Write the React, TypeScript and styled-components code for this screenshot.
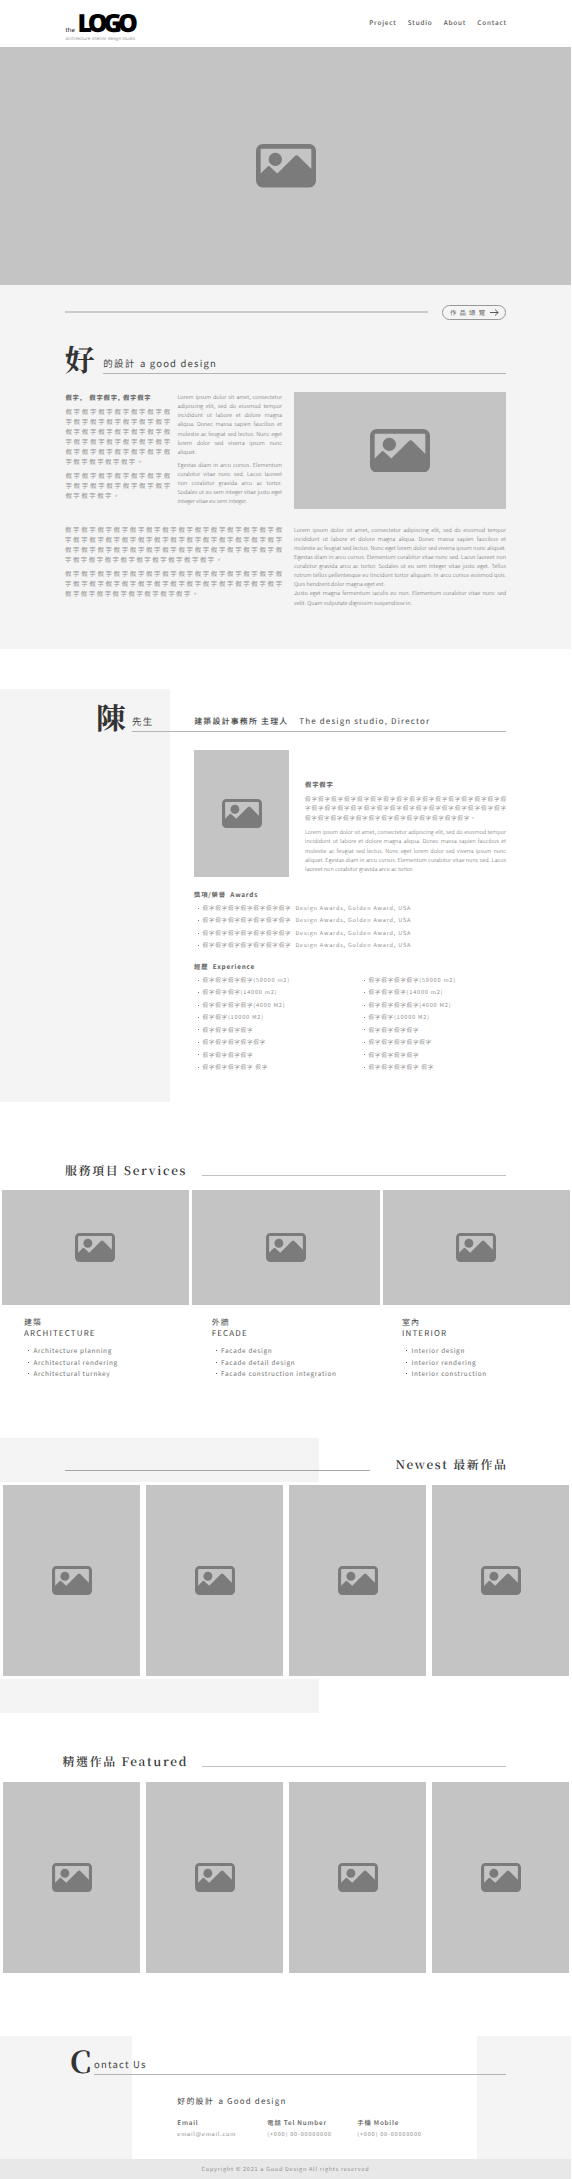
import React from 'react';
import styled, { createGlobalStyle } from 'styled-components';

const SANS = '"Noto Sans CJK TC", "Noto Sans", sans-serif';
const SERIF = '"Noto Serif CJK TC", "Noto Sans CJK TC", "Liberation Serif", serif';

const GlobalStyle = createGlobalStyle`
  * { box-sizing: border-box; }
  body { margin: 0; background: #fff; font-family: ${SANS}; color: #3c3c3c; text-rendering: geometricPrecision; }
  h1, h2, h3, p, ul { margin: 0; padding: 0; font-weight: inherit; }
  ul { list-style: none; }
`;

const Page = styled.div`
  width: 571px;
  height: 2179px;
  overflow: hidden;
  display: flex;
  flex-direction: column;
`;

/* ---------- header ---------- */
const Header = styled.header`
  height: 47px;
  padding: 0 65px;
  display: flex;
  justify-content: space-between;
`;
const Brand = styled.div`
  padding: 12px 0 0 0.5px;
  color: #000;
  white-space: nowrap;
`;
const BrandName = styled.div`
  display: flex;
  align-items: baseline;
  height: 23px;
  font-family: 'Open Sans', sans-serif;
`;
const BrandThe = styled.span`
  width: 12px;
  font-size: 6.1px;
  line-height: 8px;
`;
const BrandLogo = styled.span`
  font-size: 25px;
  line-height: 23px;
  font-weight: 800;
  letter-spacing: -4.2px;
`;
const Tagline = styled.div`
  margin-top: 0.5px;
  font-family: 'Open Sans', sans-serif;
  font-size: 4.4px;
  line-height: 6px;
  color: #8f8f8f;
`;
const Nav = styled.nav`
  display: flex;
  gap: 11.2px;
  padding-top: 18px;
  margin-right: -0.8px;
  font-size: 6.35px;
  line-height: 10px;
  font-weight: 500;
  letter-spacing: 0.82px;
  color: #555;
`;

/* ---------- placeholders ---------- */
const Placeholder = styled.div<{ $w?: number; $h: number }>`
  width: ${p => (p.$w ? `${p.$w}px` : 'auto')};
  height: ${p => p.$h}px;
  flex: ${p => (p.$w ? 'none' : 'initial')};
  display: flex;
  align-items: center;
  justify-content: center;
  background: #c4c4c4;
`;
const Glyph = styled.svg`
  display: block;
  fill: #7b7b7b;
`;
const PictureIcon = ({ w }: { w: number }) => (
  <Glyph width={w} height={w * 0.725} viewBox="0 0 180 130" preserveAspectRatio="none">
    <path
      fillRule="evenodd"
      d="M20 0H160A20 20 0 0 1 180 20V110A20 20 0 0 1 160 130H20A20 20 0 0 1 0 110V20A20 20 0 0 1 20 0ZM17 14Q14 14 14 17V88L34 68Q38 64 42 68L64 88L117 36Q122 31 127 36L166 75V17Q166 14 163 14Z"
    />
    <circle cx="58" cy="46" r="20" />
  </Glyph>
);

/* ---------- intro ---------- */
const Intro = styled.section`
  height: 364px;
  padding: 20px 65px 0 65px;
  background: #f4f4f4;
`;
const OverviewRow = styled.div`
  display: flex;
  align-items: center;
  justify-content: space-between;
  height: 15px;
`;
const OverviewRule = styled.div`
  width: 363px;
  height: 2px;
  margin-top: -1px;
  background: #cbcbcb;
`;
const OverviewButton = styled.a`
  display: flex;
  align-items: center;
  justify-content: space-between;
  width: 64px;
  height: 15px;
  padding: 0 6px 0 7px;
  border: 1px solid #979797;
  border-radius: 8px;
  font-size: 6.35px;
  line-height: 13px;
  letter-spacing: 3.2px;
  white-space: nowrap;
  color: #666;
`;
const Arrow = styled.svg`
  width: 9px;
  height: 7px;
  flex: none;
  margin-left: -4px;
  fill: none;
  stroke: #333;
  stroke-width: 0.8;
`;

const Heading = styled.div<{ $top: number; $left?: number }>`
  display: flex;
  align-items: flex-end;
  height: 30px;
  margin-top: ${p => p.$top}px;
  margin-left: ${p => p.$left ?? 0}px;
`;
const Initial = styled.h1<{ $w: number; $size?: number }>`
  width: ${p => p.$w}px;
  flex: none;
  height: 30px;
  font-family: ${SERIF};
  font-size: ${p => p.$size ?? 29.7}px;
  font-weight: 700;
  line-height: 30px;
  color: #333;
`;
const HeadingBar = styled.div`
  flex: 1;
  display: flex;
  height: 20px;
  border-bottom: 1px solid #b4b4b4;
  font-size: 9.5px;
  line-height: 19px;
  letter-spacing: 1.19px;
  white-space: nowrap;
  color: #444;
`;
const HeadingLatin = styled.span`
  margin-left: 4.6px;
`;

const IntroTop = styled.div`
  display: flex;
  justify-content: space-between;
  height: 117px;
  margin-top: 18px;
`;
const NarrowColumn = styled.div<{ $mr: number }>`
  width: 105px;
  padding-left: 0.4px;
  margin-right: ${p => p.$mr}px;
`;
const IntroBottom = styled.div`
  display: flex;
  justify-content: space-between;
  margin-top: 15px;
`;
const WideColumn = styled.div<{ $w: number; $top: number }>`
  width: ${p => p.$w}px;
  padding-top: ${p => p.$top}px;
`;

const SmallTitle = styled.h3`
  padding-top: 1px;
  font-size: 6.35px;
  font-weight: 700;
  line-height: 10px;
  letter-spacing: 0.8px;
  white-space: pre;
  color: #606060;
`;
const Para = styled.p<{ $kind: 'wide' | 'tight' | 'latin'; $top?: number }>`
  margin-top: ${p => p.$top ?? 0}px;
  margin-right: ${p => ({ wide: -1.6, tight: -0.8, latin: 0 })[p.$kind]}px;
  font-size: ${p => (p.$kind === 'wide' ? 6.35 : 5.55)}px;
  font-weight: ${p => (p.$kind === 'latin' ? 300 : 400)};
  line-height: ${p => (p.$kind === 'latin' ? 9.13 : 9.93)}px;
  letter-spacing: ${p => ({ wide: 1.59, tight: 0.8, latin: 0 })[p.$kind]}px;
  color: ${p => (p.$kind === 'latin' ? '#686868' : '#929292')};
`;
const Line = styled.span<{ $end?: boolean }>`
  display: block;
  white-space: nowrap;
  text-align: justify;
  text-align-last: ${p => (p.$end ? 'left' : 'justify')};
`;

type ParaProps = { kind: 'wide' | 'tight' | 'latin'; lines: string[]; top?: number };
const Paragraph = ({ kind, lines, top }: ParaProps) => (
  <Para $kind={kind} $top={top}>
    {lines.map((l, i) => (
      <Line key={i} $end={i === lines.length - 1}>{l}</Line>
    ))}
  </Para>
);

/* Dummy characters alternate between two ideographs; each row states its length and its first one. */
const dummy = (n: number, start = 0, tail = '') =>
  Array.from({ length: n }, (_, i) => '假字'[(i + start) % 2]).join('') + tail;

/* ---------- director ---------- */
const Director = styled.section`
  display: flex;
  height: 413px;
  margin-top: 40px;
  background: linear-gradient(#f4f4f4, #f4f4f4) no-repeat left / 170px 100%;
`;
const DirectorBody = styled.div`
  flex: 1;
  padding: 0 65px 0 96px;
`;
const Role = styled.span`
  width: 105px;
  margin-left: 40.8px;
  font-size: 7.95px;
  font-weight: 500;
`;
const RoleLatin = styled.span`
  font-size: 7.95px;
`;
const Profile = styled.div`
  display: flex;
  gap: 16px;
  margin: 18px 0 0 98px;
`;
const ProfileText = styled.div`
  flex: 1;
  padding-top: 29px;
`;
const Record = styled.div<{ $top: number }>`
  margin: ${p => p.$top}px 0 0 98px;
`;
const RecordColumns = styled.div`
  display: grid;
  grid-template-columns: 166px 1fr;
`;
const RecordList = styled.ul`
  margin-top: 2px;
  font-size: 5.55px;
  line-height: 12.47px;
  letter-spacing: 0.8px;
  white-space: pre;
  color: #909090;
`;
const RecordItem = styled.li`
  display: flex;
  align-items: center;
  &::before {
    content: '';
    width: 1px;
    height: 1px;
    margin: 0 4px 0 3.5px;
    background: #777;
  }
`;

/* ---------- services & galleries ---------- */
const TitleRow = styled.div<{ $top: number; $h: number; $left?: number }>`
  display: flex;
  align-items: flex-end;
  justify-content: space-between;
  height: ${p => p.$h}px;
  margin: ${p => p.$top}px 65px 0 ${p => p.$left ?? 65}px;
`;
const SerifTitle = styled.h2`
  height: 18px;
  margin-right: -1.6px;
  font-family: ${SERIF};
  font-size: 11.9px;
  font-weight: 600;
  line-height: 18px;
  letter-spacing: 1.7px;
  white-space: nowrap;
  color: #333;
`;
const TitleRule = styled.div<{ $w: number; $lift: number; $dark?: boolean }>`
  width: ${p => p.$w}px;
  height: 1px;
  margin-bottom: ${p => p.$lift}px;
  background: ${p => (p.$dark ? '#a6a6a6' : '#c2c2c2')};
`;
const ServiceGrid = styled.div`
  display: grid;
  grid-template-columns: repeat(3, 187.5px);
  gap: 3px;
  padding-left: 1.5px;
  margin-top: 10px;
`;
const ServiceInfo = styled.div<{ $left: number }>`
  padding: 12px 0 0 ${p => p.$left}px;
  font-size: 7.95px;
  line-height: 11px;
  letter-spacing: 1.18px;
  color: #444;
`;
const ServiceList = styled.ul`
  margin-top: 6px;
  font-size: 6.35px;
  line-height: 11.5px;
  letter-spacing: 0.7px;
  white-space: nowrap;
  color: #707070;
`;
const ServiceItem = styled.li`
  display: flex;
  align-items: center;
  &::before {
    content: '';
    width: 1px;
    height: 1px;
    margin: 0 4.4px 0 4px;
    background: #555;
  }
`;

const Newest = styled.section`
  height: 275px;
  margin-top: 58.5px;
  overflow: hidden;
  background: linear-gradient(#f4f4f4, #f4f4f4) no-repeat left / 319px 100%;
`;
const GalleryBand = styled.div<{ $top: number }>`
  display: grid;
  grid-template-columns: repeat(4, 137px);
  gap: 6px;
  padding: 3px 0 3px 3px;
  margin-top: ${p => p.$top}px;
  background: #fff;
`;

/* ---------- contact ---------- */
const Contact = styled.section`
  height: 123px;
  margin-top: 60px;
  overflow: hidden;
  background:
    linear-gradient(#fff, #fff) no-repeat 132px 0 / 345px 100%,
    #f4f4f4;
`;
const ContactHeading = styled(Heading)`
  margin-right: 65px;
`;
const ContactBody = styled.div`
  padding: 20.5px 0 0 177.3px;
`;
const ContactTitle = styled.h3`
  display: flex;
  font-size: 7.95px;
  line-height: 12px;
  letter-spacing: 1.19px;
  color: #444;
`;
const ContactGrid = styled.div`
  display: grid;
  grid-template-columns: 90px 90px 90px;
  margin-top: 9px;
`;
const ContactLabel = styled.div`
  font-size: 6.35px;
  font-weight: 500;
  line-height: 12px;
  letter-spacing: 0.8px;
  color: #555;
`;
const ContactValue = styled.div`
  font-size: 5.55px;
  line-height: 11px;
  letter-spacing: 0.8px;
  color: #8c8c8c;
`;
const Footer = styled.footer`
  height: 20px;
  background: #e8e8e8;
  text-align: center;
  font-size: 5.55px;
  line-height: 20px;
  letter-spacing: 0.74px;
  color: #8c8c8c;
`;

/* ---------- data ---------- */
const AWARD = `${dummy(14)}  Design Awards, Golden Award, USA`;
const JOBS = [
  `${dummy(8)}(59000 m2)`,
  `${dummy(6)}(14000 m2)`,
  `${dummy(8)}(4000 M2)`,
  `${dummy(4)}(10000 M2)`,
  dummy(8),
  dummy(10),
  dummy(8),
  `${dummy(8)} ${dummy(2)}`,
];
const SERVICES = [
  { left: 22.5, zh: '建築', en: 'ARCHITECTURE', items: ['Architecture planning', 'Architectural rendering', 'Architectural turnkey'] },
  { left: 19.7, zh: '外牆', en: 'FECADE', items: ['Facade design', 'Facade detail design', 'Facade construction integration'] },
  { left: 19.5, zh: '室內', en: 'INTERIOR', items: ['Interior design', 'Interior rendering', 'Interior construction'] },
];

const Gallery = ({ top }: { top: number }) => (
  <GalleryBand $top={top}>
    {[0, 1, 2, 3].map(i => (
      <Placeholder key={i} $h={191}><PictureIcon w={40} /></Placeholder>
    ))}
  </GalleryBand>
);

export default function App() {
  return (
    <>
      <GlobalStyle />
      <Page>
        <Header>
          <Brand>
            <BrandName>
              <BrandThe>the</BrandThe>
              <BrandLogo>LOGO</BrandLogo>
            </BrandName>
            <Tagline>architecture interior design studio</Tagline>
          </Brand>
          <Nav>
            <span>Project</span>
            <span>Studio</span>
            <span>About</span>
            <span>Contact</span>
          </Nav>
        </Header>
        <Placeholder $h={238}><PictureIcon w={60} /></Placeholder>

        <Intro>
          <OverviewRow>
            <OverviewRule />
            <OverviewButton>
              作品總覽
              <Arrow viewBox="0 0 9 7"><path d="M0 3.5H8.2M5 0.5L8.2 3.5L5 6.5" /></Arrow>
            </OverviewButton>
          </OverviewRow>
          <Heading $top={24}>
            <Initial $w={38.3}>好</Initial>
            <HeadingBar>的設計<HeadingLatin>a good design</HeadingLatin></HeadingBar>
          </Heading>
          <IntroTop>
            <NarrowColumn $mr={7}>
              <SmallTitle>假字,   假字假字, 假字假字</SmallTitle>
              <Paragraph kind="wide" top={4} lines={[dummy(13), dummy(13, 1), dummy(13), dummy(13, 1), dummy(13), dummy(9, 1, '。')]} />
              <Paragraph kind="wide" top={4} lines={[dummy(13), dummy(13, 1), dummy(6, 0, '。')]} />
            </NarrowColumn>
            <NarrowColumn $mr={12}>
              <Paragraph kind="latin" top={1} lines={[
                'Lorem ipsum dolor sit amet, consectetur',
                'adipiscing elit, sed do eiusmod tempor',
                'incididunt ut labore et dolore magna',
                'aliqua. Donec massa sapien faucibus et',
                'molestie ac feugiat sed lectus. Nunc eget',
                'lorem dolor sed viverra ipsum nunc',
                'aliquet.',
              ]} />
              <Paragraph kind="latin" top={4} lines={[
                'Egestas diam in arcu cursus. Elementum',
                'curabitur vitae nunc sed. Lacus laoreet',
                'non curabitur gravida arcu ac tortor.',
                'Sodales ut eu sem integer vitae justo eget',
                'integer vitae eu sem integer.',
              ]} />
            </NarrowColumn>
            <Placeholder $w={212} $h={117}><PictureIcon w={60} /></Placeholder>
          </IntroTop>
          <IntroBottom>
            <WideColumn $w={217} $top={1}>
              <Paragraph kind="wide" lines={[dummy(27), dummy(27, 1), dummy(27), dummy(19, 1, '。')]} />
              <Paragraph kind="wide" top={4} lines={[dummy(27), dummy(27, 1), dummy(16, 0, '。')]} />
            </WideColumn>
            <WideColumn $w={212} $top={1.5}>
              <Paragraph kind="latin" lines={[
                'Lorem ipsum dolor sit amet, consectetur adipiscing elit, sed do eiusmod tempor',
                'incididunt ut labore et dolore magna aliqua. Donec massa sapien faucibus et',
                'molestie ac feugiat sed lectus. Nunc eget lorem dolor sed viverra ipsum nunc aliquet.',
                'Egestas diam in arcu cursus. Elementum curabitur vitae nunc sed. Lacus laoreet non',
                'curabitur gravida arcu ac tortor. Sodales ut eu sem integer vitae justo eget. Tellus',
                'rutrum tellus pellentesque eu tincidunt tortor aliquam. In arcu cursus euismod quis.',
                'Quis hendrerit dolor magna eget est.',
              ]} />
              <Paragraph kind="latin" lines={[
                'Justo eget magna fermentum iaculis eu non. Elementum curabitur vitae nunc sed',
                'velit. Quam vulputate dignissim suspendisse in.',
              ]} />
            </WideColumn>
          </IntroBottom>
        </Intro>

        <Director>
          <DirectorBody>
            <Heading $top={13}>
              <Initial $w={36}>陳</Initial>
              <HeadingBar>
                先生
                <Role>建築設計事務所 主理人</Role>
                <RoleLatin>The design studio, Director</RoleLatin>
              </HeadingBar>
            </Heading>
            <Profile>
              <Placeholder $w={95} $h={127}><PictureIcon w={40} /></Placeholder>
              <ProfileText>
                <SmallTitle>假字假字</SmallTitle>
                <Paragraph kind="tight" top={4.5} lines={[dummy(31), dummy(31, 1), dummy(26, 0, '。')]} />
                <Paragraph kind="latin" top={4} lines={[
                  'Lorem ipsum dolor sit amet, consectetur adipiscing elit, sed do eiusmod tempor',
                  'incididunt ut labore et dolore magna aliqua. Donec massa sapien faucibus et',
                  'molestie ac feugiat sed lectus. Nunc eget lorem dolor sed viverra ipsum nunc',
                  'aliquet. Egestas diam in arcu cursus. Elementum curabitur vitae nunc sed. Lacus',
                  'laoreet non curabitur gravida arcu ac tortor.',
                ]} />
              </ProfileText>
            </Profile>
            <Record $top={12}>
              <SmallTitle>獎項/榮譽  Awards</SmallTitle>
              <RecordList>
                {[0, 1, 2, 3].map(i => <RecordItem key={i}>{AWARD}</RecordItem>)}
              </RecordList>
            </Record>
            <Record $top={9}>
              <SmallTitle>經歷  Experience</SmallTitle>
              <RecordColumns>
                {[0, 1].map(c => (
                  <RecordList key={c}>
                    {JOBS.map((j, i) => <RecordItem key={i}>{j}</RecordItem>)}
                  </RecordList>
                ))}
              </RecordColumns>
            </Record>
          </DirectorBody>
        </Director>

        <section>
          <TitleRow $top={60} $h={18}>
            <SerifTitle>服務項目 Services</SerifTitle>
            <TitleRule $w={304} $lift={4} />
          </TitleRow>
          <ServiceGrid>
            {SERVICES.map(s => (
              <div key={s.en}>
                <Placeholder $h={115}><PictureIcon w={40} /></Placeholder>
                <ServiceInfo $left={s.left}>
                  <div>{s.zh}</div>
                  <div>{s.en}</div>
                  <ServiceList>
                    {s.items.map(t => <ServiceItem key={t}>{t}</ServiceItem>)}
                  </ServiceList>
                </ServiceInfo>
              </div>
            ))}
          </ServiceGrid>
        </section>

        <Newest>
          <TitleRow $top={18} $h={18}>
            <TitleRule $w={305} $lift={3} $dark />
            <SerifTitle>Newest 最新作品</SerifTitle>
          </TitleRow>
          <Gallery top={8} />
        </Newest>

        <section>
          <TitleRow $top={40} $h={18} $left={62.5}>
            <SerifTitle>精選作品 Featured</SerifTitle>
            <TitleRule $w={304} $lift={4} />
          </TitleRow>
          <Gallery top={8} />
        </section>

        <Contact>
          <ContactHeading $top={9} $left={70}>
            <Initial $w={24} $size={30}>C</Initial>
            <HeadingBar>ontact Us</HeadingBar>
          </ContactHeading>
          <ContactBody>
            <ContactTitle>好的設計<HeadingLatin>a Good design</HeadingLatin></ContactTitle>
            <ContactGrid>
              <div><ContactLabel>Email</ContactLabel><ContactValue>email@email.com</ContactValue></div>
              <div><ContactLabel>電話 Tel Number</ContactLabel><ContactValue>(+000) 00-00000000</ContactValue></div>
              <div><ContactLabel>手機 Mobile</ContactLabel><ContactValue>(+000) 00-00000000</ContactValue></div>
            </ContactGrid>
          </ContactBody>
        </Contact>
        <Footer>Copyright © 2021 a Good Design All rights reserved</Footer>
      </Page>
    </>
  );
}
